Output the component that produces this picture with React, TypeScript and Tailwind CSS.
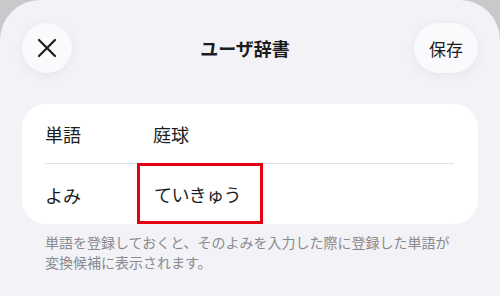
import React from "react";

export default function App() {
  return (
    <div className="w-[500px] h-[296px] bg-[#c9c9cb] overflow-hidden" style={{ fontFamily: '"Noto Sans CJK JP", "Noto Sans", sans-serif' }}>
      <div className="w-full h-full bg-[#f2f2f7] rounded-t-[40px] flex flex-col">
        <div className="flex items-center justify-between px-[22px] pt-[23px] h-[73px]">
          <div className="w-[50px] h-[50px] rounded-full bg-[#fafafc] shadow-[0_2px_12px_rgba(0,0,0,0.06)] flex items-center justify-center">
            <svg width="22" height="22" viewBox="0 0 22 22" fill="none" stroke="#1c1c1e" strokeWidth="2.2" strokeLinecap="round">
              <path d="M3 3 L19 19 M19 3 L3 19" />
            </svg>
          </div>
          <div className="text-[18px] font-bold text-[#1c1c1e] leading-none pl-[4px]">ユーザ辞書</div>
          <div className="w-[64px] h-[50px] rounded-full bg-[#fafafc] shadow-[0_2px_12px_rgba(0,0,0,0.06)] flex items-center justify-center text-[17px] text-[#1c1c1e] leading-none">
            保存
          </div>
        </div>
        <div className="mx-[22px] mt-[31px] h-[120px] bg-white rounded-[24px] pl-[23px] pr-[24px] flex flex-col">
          <div className="h-[60px] flex items-center border-b border-[#e4e4e8] text-[18px] text-[#1c1c1e] pt-[2px]">
            <div className="w-[108px]">単語</div>
            <div>庭球</div>
          </div>
          <div className="h-[60px] flex items-center text-[18px] text-[#1c1c1e]">
            <div className="w-[92px] pt-[2px]">よみ</div>
            <div className="h-[61px] -mt-[1px] w-[126px] border-[3px] border-[#e60012] flex items-center pl-[14px] pt-[2px] tracking-[-0.6px]">ていきゅう</div>
          </div>
        </div>
        <div className="px-[45px] pt-[8px] text-[14px] leading-[20px] text-[#8a8a8e] whitespace-nowrap">
          単語を登録しておくと、そのよみを入力した際に登録した単語が<br />変換候補に表示されます。
        </div>
      </div>
    </div>
  );
}
